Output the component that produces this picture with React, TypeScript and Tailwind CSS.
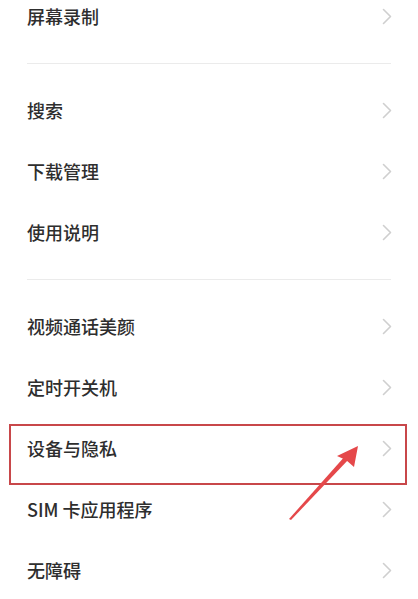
import React from "react";

const groups: string[][] = [
  ["屏幕录制"],
  ["搜索", "下载管理", "使用说明"],
  ["视频通话美颜", "定时开关机", "设备与隐私", "SIM 卡应用程序", "无障碍"],
];

function Chevron() {
  return (
    <svg width="10" height="17" viewBox="0 0 10 17" fill="none" className="shrink-0">
      <polyline points="1.5,1.5 8.5,8.5 1.5,15.5" stroke="#cfcfcf" strokeWidth="1.6" strokeLinecap="round" strokeLinejoin="round" />
    </svg>
  );
}

function Row({ label }: { label: string }) {
  return (
    <div className="flex h-[61px] items-center justify-between pl-[27px] pr-[26px]">
      <span className="text-[18px] font-medium text-[#2e2e2e]">{label}</span>
      <Chevron />
    </div>
  );
}

export default function App() {
  return (
    <div
      className="relative h-[599px] w-[418px] overflow-hidden bg-white"
      style={{ fontFamily: '"Noto Sans CJK SC", "Noto Sans", sans-serif' }}
    >
      <div className="-mt-[14px]">
        {groups.map((g, gi) => (
          <div key={gi}>
            {gi > 0 && (
              <div className="flex h-[33px] items-center px-[27px]">
                <div className="h-px w-full bg-[#ebebeb]" />
              </div>
            )}
            {g.map((label) => (
              <Row key={label} label={label} />
            ))}
          </div>
        ))}
      </div>

      {/* annotation: highlight box + arrow */}
      <div className="pointer-events-none absolute left-[9px] top-[424px] h-[61px] w-[398px] border-2 border-[#c8474a]" />
      <svg className="pointer-events-none absolute left-0 top-0" width="418" height="599" viewBox="0 0 418 599">
        <polygon points="289,519 346,455 349,459 291,520" fill="#e5484a" />
        <polygon points="358,446 354,467 346,460 337,456" fill="#e5484a" />
      </svg>
    </div>
  );
}
